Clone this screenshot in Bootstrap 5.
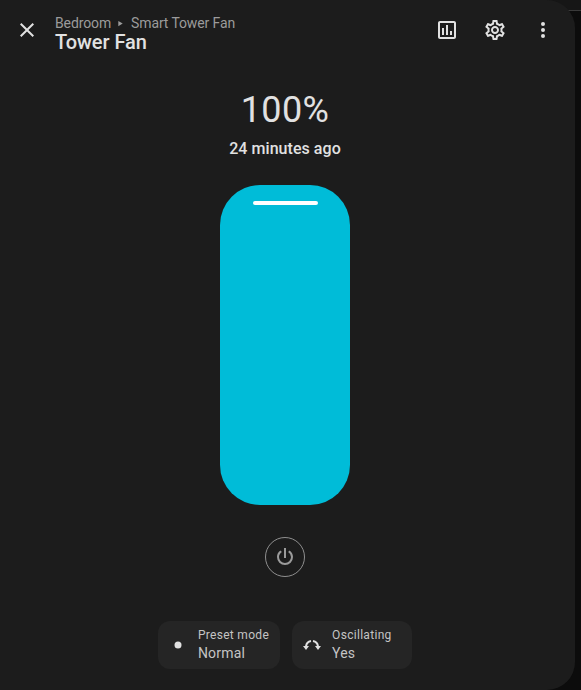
<!DOCTYPE html>
<html lang="en"><head><meta charset="utf-8">
<link href="https://cdn.jsdelivr.net/npm/bootstrap@5.3.0/dist/css/bootstrap.min.css" rel="stylesheet">
<style>
html,body{height:690px;overflow:hidden;background:#0c0c0c;font-family:Roboto,"Liberation Sans",sans-serif}
.topstrip{position:absolute;top:0;right:0;width:40px;height:11px;background:#161616;border-bottom:1px solid #3a3a3a}
.dlg{position:relative;width:575px;height:690px;background:#1c1c1c;border-radius:0 28px 28px 0;color:#e1e1e1}
.hdr{height:60px;padding:0 14px 0 9px}
.ibtn{width:36px;height:36px;color:#e1e1e1}
.ibtn svg{width:24px;height:24px;fill:currentColor}
.titles{margin-left:10px;line-height:1}
.crumb{font-size:14px;line-height:20px;color:#9b9b9b;margin-top:4px;letter-spacing:-.12px}
.crumb svg{width:7px;height:7px;fill:#9b9b9b;margin:0 7px 0 6px}
.ttl{font-size:20px;font-weight:500;line-height:18px;color:#e1e1e1;letter-spacing:-.05px}
.acts{gap:12px}
.mainc{width:570px}
.val{font-size:36px;line-height:44px;margin-top:28px;color:#e1e1e1;letter-spacing:.4px}
.ago{font-size:16px;font-weight:500;line-height:24px;margin-top:5px;letter-spacing:.05px}
.slider{width:130px;height:320px;margin-top:24px;background:#00bcd8;border-radius:40px;padding-top:16px}
.grip{width:65px;height:4px;background:#fff;border-radius:2px}
.pwr{width:40px;height:40px;margin-top:32px;border:1px solid #8f8f8f;border-radius:50%}
.pwr svg{width:24px;height:24px;fill:#9b9b9b}
.chips{margin-top:44px;gap:12px}
.chip{height:48px;min-width:120px;background:#252525;border-radius:12px;padding:0 11px 0 8px}
.cic{width:24px;height:24px;margin-right:8px}
.cic svg{width:24px;height:24px;fill:#e1e1e1}
.clab{font-size:12px;line-height:16px;color:#c4c4c4;letter-spacing:.3px}
.cval{font-size:14px;line-height:20px;color:#c4c4c4;letter-spacing:.2px}
</style></head><body>
<div class="topstrip"></div>
<div class="dlg d-flex flex-column">
 <div class="hdr d-flex align-items-center w-100">
  <div class="ibtn d-flex align-items-center justify-content-center"><svg viewBox="0 0 24 24"><path d="M19 6.41 17.59 5 12 10.59 6.41 5 5 6.41 10.59 12 5 17.59 6.41 19 12 13.41 17.59 19 19 17.59 13.41 12z"/></svg></div>
  <div class="titles flex-grow-1">
   <div class="crumb d-flex align-items-center">Bedroom<svg viewBox="0 0 8 8"><path d="M1.5 1l5 3-5 3z"/></svg>Smart Tower Fan</div>
   <div class="ttl">Tower Fan</div>
  </div>
  <div class="acts d-flex">
   <div class="ibtn d-flex align-items-center justify-content-center"><svg viewBox="0 0 24 24"><path d="M19 3H5c-1.1 0-2 .9-2 2v14c0 1.1.9 2 2 2h14c1.1 0 2-.9 2-2V5c0-1.100-.9-2-2-2zm0 16H5V5h14v14zM7 10h2v7H7zm4-3h2v10h-2zm4 6h2v4h-2z"/></svg></div>
   <div class="ibtn d-flex align-items-center justify-content-center"><svg viewBox="0 0 24 24"><path d="M19.43 12.98c.04-.32.07-.64.07-.98s-.03-.66-.07-.98l2.11-1.650c.19-.15.24-.42.12-.64l-2-3.460c-.12-.22-.39-.3-.61-.22l-2.490 1c-.52-.4-1.080-.73-1.690-.98l-.38-2.650C14.460 2.180 14.250 2 14 2h-4c-.25 0-.46.18-.49.42l-.38 2.650c-.61.25-1.170.59-1.690.98l-2.490-1c-.23-.09-.49 0-.61.22l-2 3.460c-.13.22-.07.49.12.64l2.110 1.650c-.04.32-.07.65-.07.98s.03.66.07.98l-2.110 1.650c-.19.15-.24.42-.12.64l2 3.460c.12.22.39.3.61.22l2.490-1c.52.4 1.080.73 1.690.98l.38 2.650c.03.24.24.42.49.42h4c.25 0 .46-.18.49-.42l.38-2.650c.61-.25 1.170-.59 1.690-.98l2.490 1c.23.09.49 0 .61-.22l2-3.460c.12-.22.07-.49-.12-.64l-2.110-1.650zM17.450 11.270c.04.31.05.52.05.73 0 .21-.02.43-.05.73l-.14 1.130.89.7 1.080.84-.7 1.210-1.270-.51-1.040-.42-.9.68c-.43.32-.84.56-1.250.73l-1.060.43-.16 1.130-.2 1.350h-1.400l-.19-1.350-.16-1.130-1.060-.43c-.43-.18-.83-.41-1.230-.71l-.91-.7-1.060.43-1.270.51-.7-1.210 1.080-.84.89-.7-.14-1.130c-.03-.31-.05-.54-.05-.74s.02-.43.05-.73l.14-1.130-.89-.7-1.080-.84.7-1.210 1.270.51 1.040.42.9-.68c.43-.32.84-.56 1.250-.73l1.060-.43.16-1.130.2-1.350h1.390l.19 1.350.16 1.130 1.060.43c.43.18.83.41 1.230.71l.91.7 1.060-.43 1.270-.51.7 1.210-1.070.85-.89.7.14 1.130zM12 8c-2.210 0-4 1.790-4 4s1.790 4 4 4 4-1.790 4-4-1.790-4-4-4zm0 6c-1.100 0-2-.9-2-2s.9-2 2-2 2 .9 2 2-.9 2-2 2z"/></svg></div>
   <div class="ibtn d-flex align-items-center justify-content-center"><svg viewBox="0 0 24 24"><path d="M12 16a2 2 0 1 1 0 4 2 2 0 0 1 0-4zm0-6a2 2 0 1 1 0 4 2 2 0 0 1 0-4zm0-6a2 2 0 1 1 0 4 2 2 0 0 1 0-4z"/></svg></div>
  </div>
 </div>
 <div class="mainc d-flex flex-column align-items-center">
 <div class="val">100%</div>
 <div class="ago">24 minutes ago</div>
 <div class="slider d-flex flex-column align-items-center"><div class="grip"></div></div>
 <div class="pwr d-flex align-items-center justify-content-center"><svg viewBox="0 0 24 24"><path d="M16.560 5.440l-1.450 1.450A5.969 5.969 0 0 1 18 12a6 6 0 0 1-6 6 6 6 0 0 1-6-6c0-2.170 1.160-4.060 2.880-5.120L7.440 5.440A7.961 7.961 0 0 0 4 12a8 8 0 0 0 8 8 8 8 0 0 0 8-8c0-2.720-1.360-5.120-3.440-6.560zM13 3h-2v10h2V3z"/></svg></div>
 <div class="chips d-flex">
  <div class="chip d-flex align-items-center">
   <div class="cic d-flex align-items-center justify-content-center"><svg viewBox="0 0 24 24"><circle cx="12" cy="12" r="3.500"/></svg></div>
   <div><div class="clab">Preset mode</div><div class="cval">Normal</div></div>
  </div>
  <div class="chip d-flex align-items-center">
   <div class="cic d-flex align-items-center justify-content-center"><svg viewBox="0 0 24 24"><path d="M3 13h6l-3 4zM15 13h6l-3 4z"/><path d="M6 13.500C6.400 10.400 8.400 8.500 11 8.100M13 8.100C15.600 8.500 17.600 10.400 18 13.500" fill="none" stroke="#e1e1e1" stroke-width="2"/></svg></div>
   <div><div class="clab">Oscillating</div><div class="cval">Yes</div></div>
  </div>
 </div>
 </div>
</div>
<script src="https://cdn.jsdelivr.net/npm/bootstrap@5.3.0/dist/js/bootstrap.bundle.min.js"></script>
</body></html>
